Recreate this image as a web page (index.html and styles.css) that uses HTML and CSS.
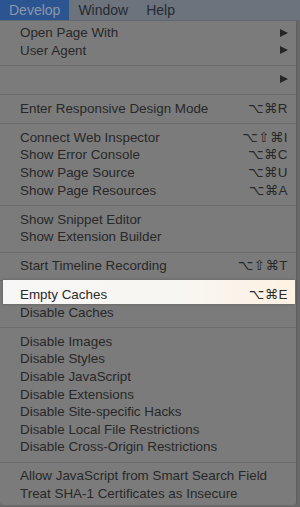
FILE: index.html
```html
<!DOCTYPE html>
<html lang="en">
<head>
    <meta charset="UTF-8">
    <title>Develop Menu</title>
    <link rel="stylesheet" href="styles.css">
</head>
<body>
    <!-- Menu bar -->
    <header class="menubar">
        <span class="menubar-item active">Develop</span>
        <span class="menubar-item">Window</span>
        <span class="menubar-item">Help</span>
    </header>

    <!-- Dropdown -->
    <nav class="menu">
        <div class="menu-item">Open Page With <span class="submenu-arrow"></span></div>
        <div class="menu-item">User Agent <span class="submenu-arrow"></span></div>
        <div class="separator"></div>
        <div class="menu-item"><span></span><span class="submenu-arrow"></span></div>
        <div class="separator"></div>
        <div class="menu-item">Enter Responsive Design Mode <span class="shortcut">⌥⌘R</span></div>
        <div class="separator"></div>
        <div class="menu-item">Connect Web Inspector <span class="shortcut">⌥⇧⌘I</span></div>
        <div class="menu-item">Show Error Console <span class="shortcut">⌥⌘C</span></div>
        <div class="menu-item">Show Page Source <span class="shortcut">⌥⌘U</span></div>
        <div class="menu-item">Show Page Resources <span class="shortcut">⌥⌘A</span></div>
        <div class="separator"></div>
        <div class="menu-item">Show Snippet Editor</div>
        <div class="menu-item">Show Extension Builder</div>
        <div class="separator"></div>
        <div class="menu-item">Start Timeline Recording <span class="shortcut">⌥⇧⌘T</span></div>
        <div class="separator"></div>
        <div class="menu-item selected">Empty Caches <span class="shortcut">⌥⌘E</span></div>
        <div class="menu-item">Disable Caches</div>
        <div class="separator"></div>
        <div class="menu-item">Disable Images</div>
        <div class="menu-item">Disable Styles</div>
        <div class="menu-item">Disable JavaScript</div>
        <div class="menu-item">Disable Extensions</div>
        <div class="menu-item">Disable Site-specific Hacks</div>
        <div class="menu-item">Disable Local File Restrictions</div>
        <div class="menu-item">Disable Cross-Origin Restrictions</div>
        <div class="separator"></div>
        <div class="menu-item">Allow JavaScript from Smart Search Field</div>
        <div class="menu-item">Treat SHA-1 Certificates as Insecure</div>
    </nav>
</body>
</html>
```

FILE: styles.css
```css
/* Base Styles */
body {
    font-family: 'Liberation Sans', 'DejaVu Sans', sans-serif;
    margin: 0;
    padding: 0;
    width: 300px;
    height: 507px;
    background-color: #686868;
    color: #282828;
    overflow: hidden;
}

/* Menu Bar */
.menubar {
    display: flex;
    height: 21px;
    background-color: #6c737c;
    border-bottom: 1px solid #62676d;
    box-sizing: border-box;
    font-size: 14px;
}

.menubar-item {
    display: flex;
    align-items: center;
    padding: 0 9px;
    color: #262a30;
}

.menubar-item.active {
    background-color: #2b5490;
    color: #8c97aa;
}

/* Dropdown */
.menu {
    width: 297px;
    box-sizing: border-box;
    padding: 3px 0 3px;
    background-color: #7b7b7b;
    border-right: 1px solid #5f5f5f;
    border-bottom: 1px solid #6a6a6a;
    border-radius: 0 0 4px 4px;
    font-size: 13.4px;
}

.menu-item {
    display: flex;
    justify-content: space-between;
    align-items: center;
    height: 17.6px;
    padding: 0 8px 0 20px;
    position: relative;
    white-space: nowrap;
}

.shortcut {
    letter-spacing: 0.5px;
}

.submenu-arrow {
    width: 0;
    height: 0;
    border-top: 4.5px solid transparent;
    border-bottom: 4.5px solid transparent;
    border-left: 8px solid #262626;
}

.separator {
    height: 11.4px;
    box-sizing: border-box;
    padding-top: 6px;
}

.separator::after {
    content: "";
    display: block;
    height: 1px;
    background-color: #6d6d6d;
}

/* Highlighted item */
.menu-item.selected {
    color: #2a2a2a;
    z-index: 1;
}

.menu-item.selected::before {
    content: "";
    position: absolute;
    top: -6px;
    bottom: -1px;
    left: 3px;
    right: 1px;
    background: linear-gradient(90deg, #f7f7f6 0%, #f8f6f2 60%, #fdf1e2 100%);
    box-shadow: 0 0 3px rgba(0,0,0,0.25);
    z-index: -1;
}
```
